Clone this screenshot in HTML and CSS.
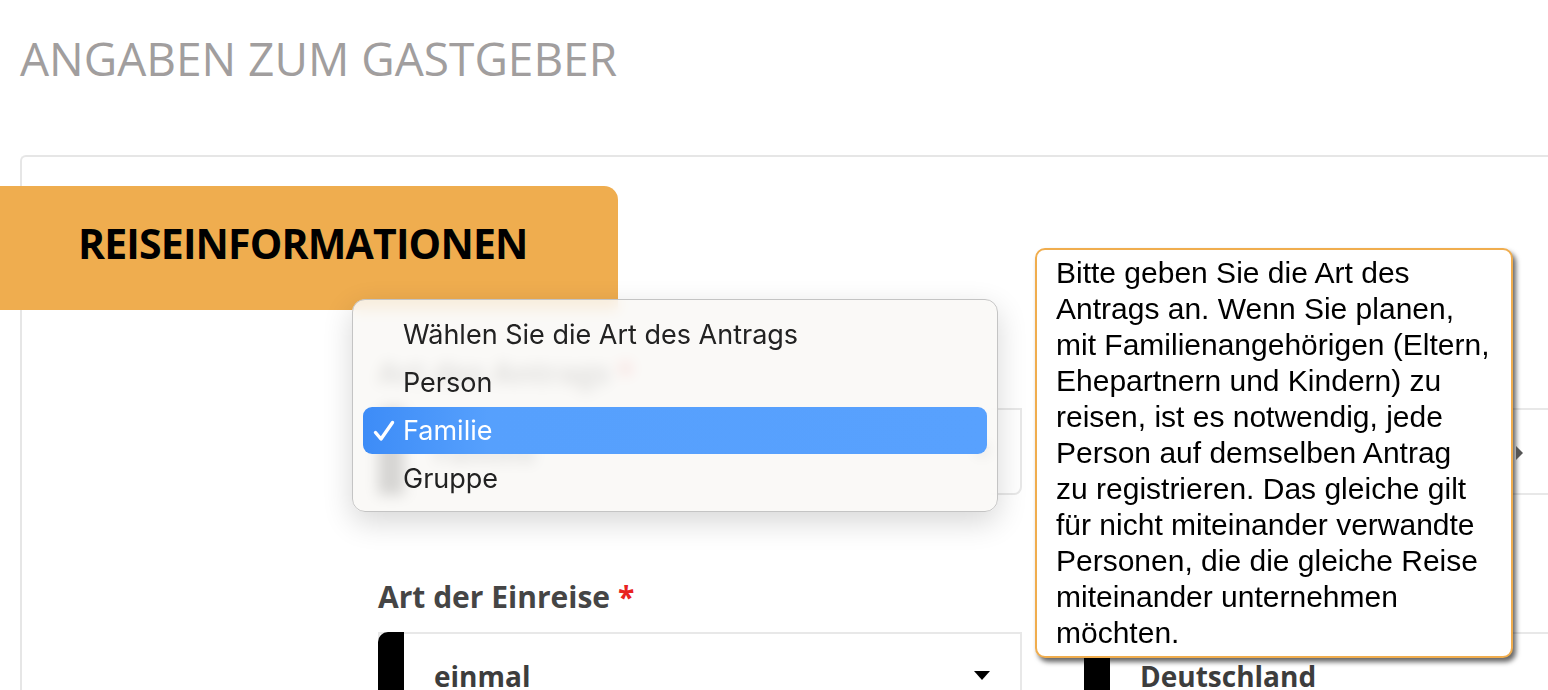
FILE: index.html
```html
<!DOCTYPE html>
<html lang="de">
<head>
<meta charset="utf-8">
<title>Reiseinformationen</title>
<link rel="stylesheet" href="styles.css">
</head>
<body>
<h1 class="page-title">ANGABEN ZUM GASTGEBER</h1>
<section class="card">
  <div class="tab">REISEINFORMATIONEN</div>
  <div class="form">
    <div class="col">
      <div class="field">
        <label class="label">Art des Antrags <span class="req">*</span></label>
        <div class="select"><span class="bar"></span><span class="value">Familie</span><span class="caret"></span></div>
      </div>
      <div class="field">
        <label class="label">Art der Einreise <span class="req">*</span></label>
        <div class="select"><span class="bar"></span><span class="value">einmal</span><span class="caret"></span></div>
      </div>
    </div>
    <div class="col">
      <div class="field">
        <label class="label">Zweck der Reise <span class="req">*</span></label>
        <div class="select"><span class="bar"></span><span class="value">Tourismus</span><span class="caret"></span></div>
      </div>
      <div class="field">
        <label class="label">Staatsangehörigkeit <span class="req">*</span></label>
        <div class="select"><span class="bar"></span><span class="value">Deutschland</span><span class="caret"></span></div>
      </div>
    </div>
  </div>
</section>

<ul class="menu">
  <li class="menu-item">Wählen Sie die Art des Antrags</li>
  <li class="menu-item">Person</li>
  <li class="menu-item selected"><svg class="check" width="22" height="22" viewBox="0 0 22 22"><path d="M2.5 12.5 L8 19 L19.5 2.5" fill="none" stroke="#fff" stroke-width="3.4" stroke-linecap="round" stroke-linejoin="round"/></svg>Familie</li>
  <li class="menu-item">Gruppe</li>
</ul>

<div class="tooltip">Bitte geben Sie die Art des<br>Antrags an. Wenn Sie planen,<br>mit Familienangehörigen (Eltern,<br>Ehepartnern und Kindern) zu<br>reisen, ist es notwendig, jede<br>Person auf demselben Antrag<br>zu registrieren. Das gleiche gilt<br>für nicht miteinander verwandte<br>Personen, die die gleiche Reise<br>miteinander unternehmen<br>möchten.</div>
<span class="tip-arrow"></span>
</body>
</html>
```
FILE: styles.css
```css
html, body {
  margin: 0;
  padding: 0;
  background: #ffffff;
  overflow: hidden;
  width: 1548px;
  height: 690px;
}
body {
  font-family: "Open Sans", "Liberation Sans", sans-serif;
  position: relative;
}
.page-title {
  margin: 0;
  padding: 30px 0 0 20px;
  font-size: 46px;
  line-height: 57px;
  font-weight: 400;
  color: #a19e9e;
}
.card {
  margin: 68px 0 0 20px;
  width: 1600px;
  height: 600px;
  border: 2px solid #e6e6e6;
  border-right: none;
  border-bottom: none;
  border-top-left-radius: 6px;
  padding-top: 29px;
  box-sizing: border-box;
}
.tab {
  margin-left: -22px;
  width: 618px;
  box-sizing: border-box;
  background: #efad4f;
  border-top-right-radius: 14px;
  padding: 32px 0 41px 78px;
  font-size: 41px;
  line-height: 51px;
  font-weight: 700;
  color: #000;
  letter-spacing: -0.85px;
}
.form {
  display: flex;
  gap: 62px;
  margin: 45px 0 0 356px;
}
.col {
  width: 644px;
  flex-shrink: 0;
  display: flex;
  flex-direction: column;
  gap: 84px;
}
.col + .col { width: 700px; }
.label {
  display: block;
  font-size: 30px;
  line-height: 36px;
  font-weight: 700;
  color: #454545;
  margin-bottom: 17px;
  white-space: nowrap;
}
.req { color: #e8231f; }
.select {
  height: 87px;
  box-sizing: border-box;
  border: 2px solid #e8e8e8;
  border-radius: 0 0 8px 0;
  display: flex;
  align-items: center;
}
.bar {
  align-self: stretch;
  width: 26px;
  margin: -2px 0 -2px -2px;
  background: #000;
  border-top-left-radius: 10px;
}
.value {
  margin-left: 30px;
  font-size: 28px;
  font-weight: 700;
  color: #3d3d3d;
  flex: 1;
}
.caret {
  width: 0;
  height: 0;
  border-left: 8px solid transparent;
  border-right: 8px solid transparent;
  border-top: 9px solid #000;
  margin-right: 30px;
}
.menu {
  position: absolute;
  left: 352px;
  top: 299px;
  width: 646px;
  height: 213px;
  box-sizing: border-box;
  margin: 0;
  padding: 11px 10px 0;
  list-style: none;
  border-radius: 13px;
  border: 1px solid #c4c4c4;
  background: rgba(249, 248, 246, 0.86);
  backdrop-filter: blur(7px);
  -webkit-backdrop-filter: blur(7px);
  box-shadow: 0 10px 30px rgba(0, 0, 0, 0.16);
  font-family: "Inter", "Roboto", sans-serif;
  font-size: 27px;
  color: #222;
}
.menu-item {
  height: 48px;
  line-height: 48px;
  padding-left: 40px;
  position: relative;
  border-radius: 9px;
  white-space: nowrap;
}
.menu-item.selected {
  height: 47px;
  line-height: 47px;
  background: linear-gradient(90deg, #3d8cf7 0%, #56a0fd 20%, #58a1fe 100%);
  color: #fff;
  margin-bottom: 1px;
}
.check {
  position: absolute;
  left: 10px;
  top: 13px;
}
.tooltip {
  position: absolute;
  left: 1035px;
  top: 248px;
  width: 478px;
  height: 410px;
  box-sizing: border-box;
  padding: 5px 0 0 19px;
  background: #fff;
  border: 2px solid #f0ad4e;
  border-radius: 10px;
  box-shadow: 3px 4px 5px rgba(0, 0, 0, 0.6);
  font-family: "Liberation Sans", Arial, sans-serif;
  font-size: 30px;
  line-height: 36px;
  color: #000;
  white-space: nowrap;
}
.tip-arrow {
  position: absolute;
  left: 1516px;
  top: 446px;
  width: 0;
  height: 0;
  border-top: 7px solid transparent;
  border-bottom: 7px solid transparent;
  border-left: 7px solid #555;
}
```
